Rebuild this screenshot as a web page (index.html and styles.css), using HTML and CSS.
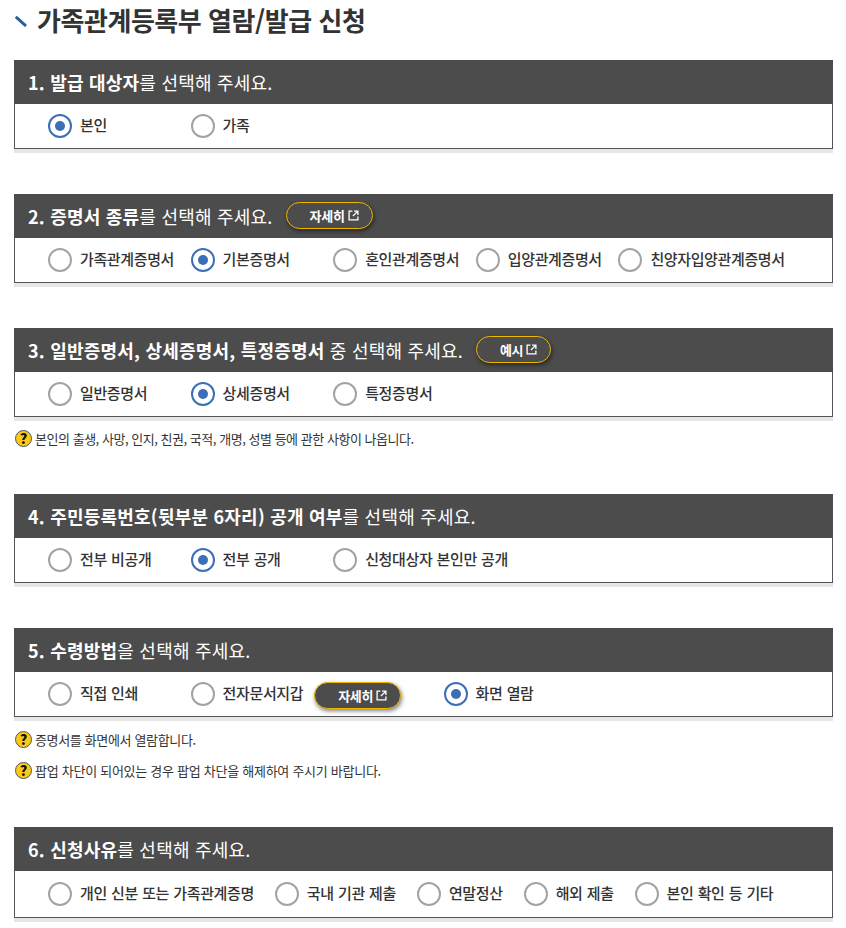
FILE: index.html
```html
<!DOCTYPE html>
<html lang="ko">
<head>
<meta charset="utf-8">
<title>가족관계등록부 열람/발급 신청</title>
<link rel="stylesheet" href="styles.css">
</head>
<body>
<main class="page">
  <h1 class="title"><span class="tick"></span>가족관계등록부 열람/발급 신청</h1>

  <section class="sec s1">
    <h2 class="head"><span><b>1. 발급 대상자</b>를 선택해 주세요.</span></h2>
    <div class="opts">
      <label class="opt on"><i class="radio"></i>본인</label>
      <label class="opt"><i class="radio"></i>가족</label>
    </div>
  </section>

  <section class="sec s2">
    <h2 class="head"><span><b>2. 증명서 종류</b>를 선택해 주세요.</span>
      <a class="btn"><span>자세히</span><svg class="ext" viewBox="0 0 10 10"><path d="M4 1H1v8h8V6M5.5 1H9v3.5M9 1 4.5 5.5"/></svg></a></h2>
    <div class="opts">
      <label class="opt"><i class="radio"></i>가족관계증명서</label>
      <label class="opt on"><i class="radio"></i>기본증명서</label>
      <label class="opt"><i class="radio"></i>혼인관계증명서</label>
      <label class="opt"><i class="radio"></i>입양관계증명서</label>
      <label class="opt"><i class="radio"></i>친양자입양관계증명서</label>
    </div>
  </section>

  <section class="sec s3">
    <h2 class="head"><span><b>3. 일반증명서, 상세증명서, 특정증명서</b> 중 선택해 주세요.</span>
      <a class="btn btn-short"><span>예시</span><svg class="ext" viewBox="0 0 10 10"><path d="M4 1H1v8h8V6M5.5 1H9v3.5M9 1 4.5 5.5"/></svg></a></h2>
    <div class="opts">
      <label class="opt"><i class="radio"></i>일반증명서</label>
      <label class="opt on"><i class="radio"></i>상세증명서</label>
      <label class="opt"><i class="radio"></i>특정증명서</label>
    </div>
  </section>
  <p class="note n3"><i class="q">?</i>본인의 출생, 사망, 인지, 친권, 국적, 개명, 성별 등에 관한 사항이 나옵니다.</p>

  <section class="sec s4">
    <h2 class="head"><span><b>4. 주민등록번호(뒷부분 6자리) 공개 여부</b>를 선택해 주세요.</span></h2>
    <div class="opts">
      <label class="opt"><i class="radio"></i>전부 비공개</label>
      <label class="opt on"><i class="radio"></i>전부 공개</label>
      <label class="opt"><i class="radio"></i>신청대상자 본인만 공개</label>
    </div>
  </section>

  <section class="sec s5">
    <h2 class="head"><span><b>5. 수령방법</b>을 선택해 주세요.</span></h2>
    <div class="opts">
      <label class="opt"><i class="radio"></i>직접 인쇄</label>
      <label class="opt opt-wide"><i class="radio"></i>전자문서지갑<a class="btn btn-dark"><span>자세히</span><svg class="ext" viewBox="0 0 10 10"><path d="M4 1H1v8h8V6M5.5 1H9v3.5M9 1 4.5 5.5"/></svg></a></label>
      <label class="opt on"><i class="radio"></i>화면 열람</label>
    </div>
  </section>
  <p class="note n5"><i class="q">?</i>증명서를 화면에서 열람합니다.</p>
  <p class="note n5b"><i class="q">?</i>팝업 차단이 되어있는 경우 팝업 차단을 해제하여 주시기 바랍니다.</p>

  <section class="sec s6">
    <h2 class="head"><span><b>6. 신청사유</b>를 선택해 주세요.</span></h2>
    <div class="opts opts-auto">
      <label class="opt"><i class="radio"></i>개인 신분 또는 가족관계증명</label>
      <label class="opt"><i class="radio"></i>국내 기관 제출</label>
      <label class="opt"><i class="radio"></i>연말정산</label>
      <label class="opt"><i class="radio"></i>해외 제출</label>
      <label class="opt"><i class="radio"></i>본인 확인 등 기타</label>
    </div>
  </section>
</main>
</body>
</html>
```
FILE: styles.css
```css
* { box-sizing: border-box; }
html, body { margin: 0; padding: 0; background: #fff; }
body {
  font-family: "Noto Sans CJK KR", "Liberation Sans", sans-serif;
  color: #333;
  overflow: hidden;
  height: 928px;
}
.page { padding: 0 13px 0 14px; }

.title {
  display: flex;
  align-items: center;
  margin: 0;
  height: 44px;
  padding-bottom: 5px;
  font-size: 26px;
  font-weight: 700;
  line-height: 39px;
  letter-spacing: -0.45px;
  color: #333;
}
.tick {
  width: 14px;
  height: 2.6px;
  margin: 3px 9px 0 0;
  background: #27609f;
  transform: rotate(42deg);
  border-radius: 1px;
}

.sec { margin-top: 16px; box-shadow: 0 4px 0 #e6e6e6; }
.s2, .s3, .s4, .s5 { margin-top: 45px; }
.s6 { margin-top: 48px; }

.head {
  display: flex;
  align-items: center;
  height: 44px;
  margin: 0;
  padding: 0 0 1px 14px;
  background: #4c4c4c;
  color: #fff;
  font-size: 18px;
  font-weight: 400;
  letter-spacing: 0.22px;
  white-space: nowrap;
}
.head b { font-weight: 700; }

.opts {
  display: flex;
  align-items: center;
  height: 45px;
  padding: 0 0 3px 33px;
  background: #fff;
  border: 1px solid #555;
  border-top: 0;
}
.opts-auto { height: 47px; }
.opt {
  display: flex;
  align-items: center;
  width: 142.6px;
  flex: none;
  font-size: 15px;
  font-weight: 500;
  letter-spacing: -0.37px;
  word-spacing: 0.4px;
  color: #333;
  white-space: nowrap;
}
.opt-wide { width: 253px; }
.opts-auto .opt { width: auto; margin-right: 21px; }

.radio {
  position: relative;
  flex: none;
  width: 24px;
  height: 24px;
  margin: 2px 8px 0 0;
  border: 2px solid #a3a3a3;
  border-radius: 50%;
  background: #fff;
}
.on .radio { border-color: #3b6fb6; }
.on .radio::after {
  content: "";
  position: absolute;
  left: 5px;
  top: 5px;
  width: 10px;
  height: 10px;
  border-radius: 50%;
  background: #3b6fb6;
}

.btn {
  display: inline-flex;
  align-items: center;
  justify-content: center;
  gap: 3px;
  width: 87px;
  height: 27px;
  margin-left: 13px;
  padding-left: 10px;
  border: 1.5px solid #efb800;
  border-radius: 14px;
  background: #4c4c4c;
  color: #fff;
  font-size: 13px;
  font-weight: 700;
  letter-spacing: -0.3px;
  box-shadow: 1px 2px 4px rgba(0, 0, 0, 0.5);
}
.btn-short { width: 75px; }
.btn-dark { margin: 6px 0 0 11px; }
.ext {
  width: 11px;
  height: 11px;
  fill: none;
  stroke: #fff;
  stroke-width: 1.2;
}

.note {
  display: flex;
  align-items: center;
  margin: 0;
  height: 18px;
  padding-left: 1px;
  font-size: 13px;
  letter-spacing: -0.35px;
  color: #333;
}
.n3 { margin-top: 12px; letter-spacing: -0.47px; }
.n5 { margin-top: 13px; }
.n5b { margin-top: 13px; letter-spacing: -0.27px; }
.n3 + .s4 { margin-top: 47px; }
.q {
  display: flex;
  align-items: center;
  justify-content: center;
  flex: none;
  width: 17px;
  height: 17px;
  margin-right: 3px;
  border: 1px solid #555;
  border-radius: 50%;
  background: #fcc916;
  color: #111;
  font-style: normal;
  font-size: 14px;
  font-weight: 900;
  letter-spacing: 0;
}
```
